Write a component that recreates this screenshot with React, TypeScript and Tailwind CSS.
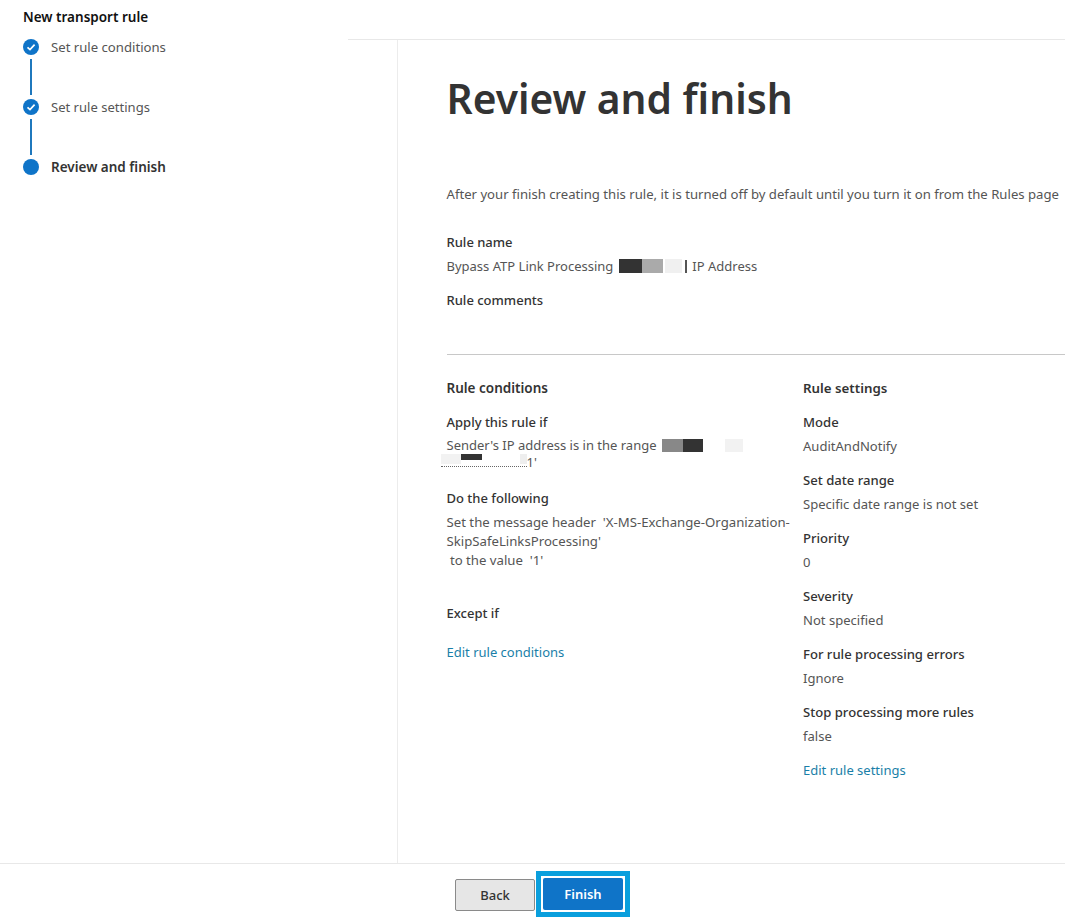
import React from "react";

const font = { fontFamily: '"Noto Sans", "Liberation Sans", sans-serif' };

function Check() {
  return (
    <span className="flex h-4 w-4 shrink-0 items-center justify-center rounded-full bg-[#0f74c8]">
      <svg width="10" height="10" viewBox="0 0 10 10" fill="none">
        <path d="M1.5 5.3 L4 7.6 L8.6 2.6" stroke="#fff" strokeWidth="1.7" />
      </svg>
    </span>
  );
}

function Field({ label, value }: { label: string; value: string }) {
  return (
    <div className="mb-[14px]">
      <div className="mb-1 text-[13.1px] leading-5 font-medium text-[#333]">{label}</div>
      <div className="text-[13.05px] leading-5 text-[#555]">{value}</div>
    </div>
  );
}

function Patch({ className }: { className: string }) {
  return <span className={`inline-block shrink-0 blur-[0.6px] ${className}`} />;
}

export default function App() {
  return (
    <div style={font} className="flex h-[922px] w-[1065px] flex-col overflow-hidden bg-white">
      <header className="flex h-[40px] shrink-0">
        <div className="w-[348px] pl-[23px] pt-[7px] text-[13.5px] leading-5 font-semibold whitespace-nowrap text-[#111]">New transport rule</div>
        <div className="flex-1 border-b border-[#e8e8e8]" />
      </header>
      <div className="flex min-h-0 flex-1">
        <aside className="w-[398px] shrink-0 border-r border-[#ececec] pl-[23px]">
          <div className="-mt-px flex h-4 items-center gap-3">
            <Check />
            <span className="pt-px text-[13.15px] text-[#555]">Set rule conditions</span>
          </div>
          <div className="my-1 ml-[7px] h-[36px] w-[2px] bg-[#1f78bd]" />
          <div className="flex h-4 items-center gap-3">
            <Check />
            <span className="pt-px text-[13.05px] text-[#555]">Set rule settings</span>
          </div>
          <div className="my-1 ml-[7px] h-[36px] w-[2px] bg-[#1f78bd]" />
          <div className="flex h-4 items-center gap-3">
            <span className="h-4 w-4 rounded-full bg-[#0f74c8]" />
            <span className="pt-px text-[13.5px] font-semibold text-[#333]">Review and finish</span>
          </div>
        </aside>
        <main className="min-w-0 flex-1 pl-[48.5px]">
          <h1 className="mt-[28px] text-[40.7px] leading-[60px] font-semibold whitespace-nowrap text-[#333]">Review and finish</h1>
          <p className="mt-[56px] text-[13.15px] leading-5 whitespace-nowrap text-[#555]">After your finish creating this rule, it is turned off by default until you turn it on from the Rules page</p>
          <div className="mt-[28px] mb-1 text-[13px] leading-5 font-medium text-[#333]">Rule name</div>
          <div className="flex h-5 items-center text-[13px] leading-5 text-[#555]">
            Bypass ATP Link Processing
            <span className="ml-[6px] flex items-center">
              <Patch className="h-[14px] w-[23px] bg-[#333]" />
              <Patch className="h-[14px] w-[21px] bg-[#aaa]" />
              <Patch className="ml-[2px] h-[14px] w-[17px] bg-[#f0f0f0]" />
              <Patch className="ml-[3px] h-[13px] w-[2px] bg-[#555]" />
            </span>
            <span className="ml-[5px]">IP Address</span>
          </div>
          <div className="mt-[14px] text-[13px] leading-5 font-medium text-[#333]">Rule comments</div>
          <hr className="mt-[44px] border-t border-[#c8c8c8]" />
          <div className="mt-[23px] flex">
            <div className="w-[356.5px] shrink-0">
              <div className="mb-[14px] text-[13.5px] leading-5 font-semibold text-[#333]">Rule conditions</div>
              <div className="mb-1 text-[13px] leading-5 font-medium text-[#333]">Apply this rule if</div>
              <div className="mt-[2px] flex h-[19px] items-center text-[13px] leading-[19px] text-[#555]">
                Sender's IP address is in the range
                <span className="ml-[5px] flex items-center">
                  <Patch className="h-[13px] w-[21px] bg-[#888]" />
                  <Patch className="h-[13px] w-[20px] bg-[#333]" />
                  <Patch className="ml-[22px] h-[13px] w-[18px] bg-[#f2f2f2]" />
                </span>
              </div>
              <div className="-ml-[6px] -mt-[2px] flex h-[19px] items-start text-[13px] leading-[19px] text-[#555]">
                <span className="flex h-[14px] w-[86px] border-b border-dotted border-[#666]">
                  <Patch className="mt-[1px] h-[10px] w-[20px] bg-[#f2f2f2]" />
                  <Patch className="mt-[1px] h-[6px] w-[21px] bg-[#333]" />
                  <Patch className="ml-[38px] mt-[1px] h-[10px] w-[7px] bg-[#eee]" />
                </span>
                <span>1'</span>
              </div>
              <div className="mt-[16px] mb-[5px] text-[13px] leading-5 font-medium text-[#333]">Do the following</div>
              <div className="text-[13.2px] leading-[19px] text-[#555]">
                Set the message header&nbsp; 'X-MS-Exchange-Organization-
                <br />
                SkipSafeLinksProcessing'
                <br />
                &nbsp;to the value&nbsp; '1'
              </div>
              <div className="mt-[33px] text-[13px] leading-5 font-medium text-[#333]">Except if</div>
              <a className="mt-[19px] block text-[13px] leading-5 text-[#1a7fa8]">Edit rule conditions</a>
            </div>
            <div className="flex-1">
              <div className="mb-[14px] text-[13.3px] leading-5 font-semibold text-[#333]">Rule settings</div>
              <Field label="Mode" value="AuditAndNotify" />
              <Field label="Set date range" value="Specific date range is not set" />
              <Field label="Priority" value="0" />
              <Field label="Severity" value="Not specified" />
              <Field label="For rule processing errors" value="Ignore" />
              <Field label="Stop processing more rules" value="false" />
              <a className="block text-[13px] leading-5 text-[#1a7fa8]">Edit rule settings</a>
            </div>
          </div>
        </main>
      </div>
      <footer className="flex h-[59px] shrink-0 items-start border-t border-[#e8e8e8] pl-[455px] pt-[7px]">
        <button className="mt-[8px] h-[32px] w-[80px] rounded-[2px] border border-[#8a8a8a] bg-[#e6e6e6] pt-px text-[13px] font-medium text-[#333]">Back</button>
        <span className="ml-px block border-[5px] border-[#0a9fdd] p-[2px]">
          <button className="block h-[32px] w-[80px] rounded-[2px] bg-[#0f74c8] pt-px text-[13px] font-semibold text-white">Finish</button>
        </span>
      </footer>
    </div>
  );
}
